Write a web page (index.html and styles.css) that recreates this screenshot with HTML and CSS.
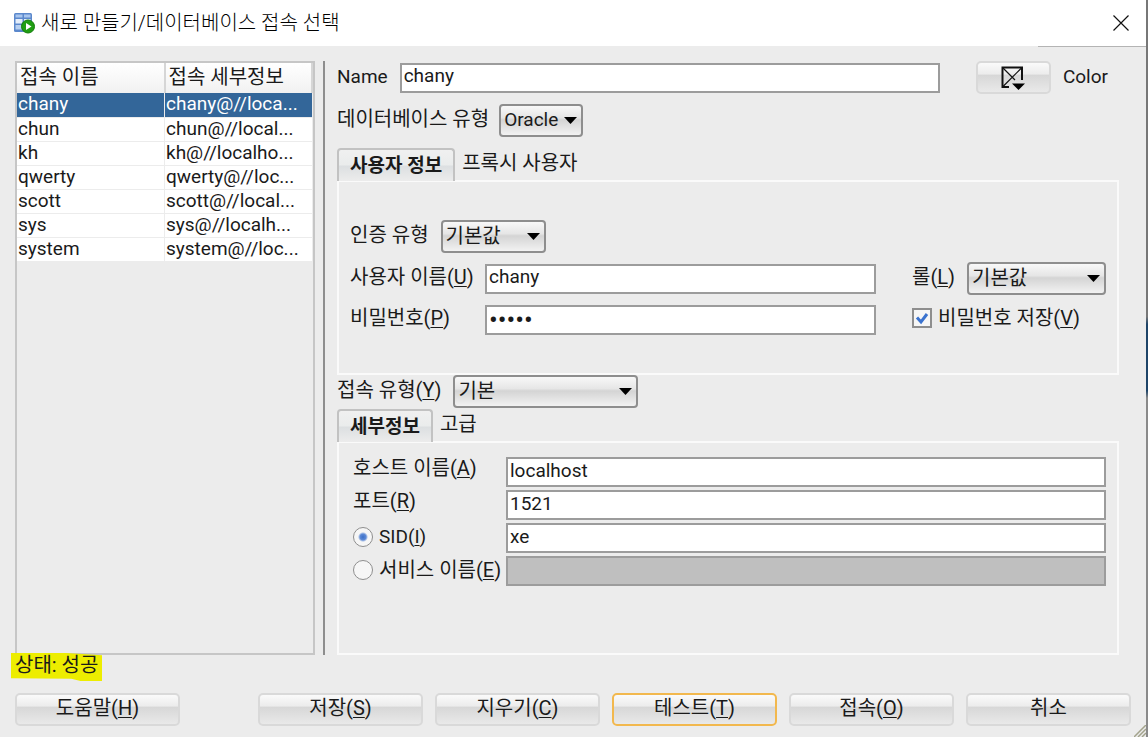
FILE: index.html
```html
<!DOCTYPE html>
<html lang="ko">
<head>
<meta charset="utf-8">
<title>새로 만들기/데이터베이스 접속 선택</title>
<link rel="stylesheet" href="styles.css">
</head>
<body>
<div class="window">
  <header class="titlebar">
    <svg class="app-icon" viewBox="0 0 22 22" aria-hidden="true">
      <rect x="1" y="1" width="18" height="19" rx="1.5" fill="#5b88cc"/>
      <path d="M2.500 2.500h7v3h-7zM11 2.500h6.500v3H11z" fill="#a9c6ee"/>
      <path d="M2.500 7h7v4.500h-7zM11 7h6.500v4.500H11z" fill="#e4edfa"/>
      <path d="M2.500 13h7v4.500h-7zM11 13h6.500v4.500H11z" fill="#b7cff0"/>
      <circle cx="15" cy="14.500" r="6.500" fill="#1f9e12" stroke="#137c0b"/>
      <path d="M13 11v7l5.500-3.500z" fill="#fff"/>
    </svg>
    <h1 class="title">새로 만들기/데이터베이스 접속 선택</h1>
    <button class="close" type="button" aria-label="닫기">
      <svg viewBox="0 0 16 16"><path d="M.5.5l15 15M15.500.5l-15 15" stroke="#111" stroke-width="1.200"/></svg>
    </button>
  </header>

  <main class="content">
    <section class="list">
      <table class="conns">
        <thead><tr><th>접속 이름</th><th>접속 세부정보</th></tr></thead>
        <tbody>
          <tr class="selected"><td>chany</td><td>chany@//loca...</td></tr>
          <tr><td>chun</td><td>chun@//local...</td></tr>
          <tr><td>kh</td><td>kh@//localho...</td></tr>
          <tr><td>qwerty</td><td>qwerty@//loc...</td></tr>
          <tr><td>scott</td><td>scott@//local...</td></tr>
          <tr><td>sys</td><td>sys@//localh...</td></tr>
          <tr><td>system</td><td>system@//loc...</td></tr>
        </tbody>
      </table>
    </section>

    <form class="details" id="details">
      <div class="name-row">
        <label class="latin" for="name">Name</label>
        <input class="field" id="name" type="text" value="chany">
        <button class="btn color-btn" type="button" id="color" aria-labelledby="color-label">
          <svg viewBox="0 0 24 24" aria-hidden="true">
            <path d="M21 14V1.500H1.500V21H8" fill="none" stroke="#111" stroke-width="2"/>
            <path d="M2 2l12 12M20.500 2L2 20.500" stroke="#111" stroke-width="1.200"/>
            <path d="M11 17.500h13L17.500 24z" fill="#000"/>
          </svg>
        </button>
        <label class="latin" id="color-label" for="color">Color</label>
      </div>

      <div class="type-row">
        <label for="dbtype">데이터베이스 유형</label>
        <select class="select db-select" id="dbtype"><option>Oracle</option></select>
      </div>

      <div class="tabs" role="tablist">
        <button class="tab active" type="button" role="tab" aria-selected="true">사용자 정보</button>
        <button class="tab" type="button" role="tab" aria-selected="false">프록시 사용자</button>
      </div>
      <div class="panel user-panel">
        <div class="auth-row">
          <label for="auth">인증 유형</label>
          <select class="select auth-select" id="auth"><option>기본값</option></select>
        </div>
        <div class="user-grid">
          <label for="user">사용자 이름(<u>U</u>)</label>
          <input class="field" id="user" type="text" value="chany">
          <label class="role-label" for="role">롤(<u>L</u>)</label>
          <select class="select" id="role"><option>기본값</option></select>
          <label for="pass">비밀번호(<u>P</u>)</label>
          <input class="field password" id="pass" type="password" value="tiger">
          <label class="save-pass"><input class="check" type="checkbox" checked><span>비밀번호 저장(<u>V</u>)</span></label>
        </div>
      </div>

      <div class="conn-row">
        <label for="conntype">접속 유형(<u>Y</u>)</label>
        <select class="select conn-select" id="conntype"><option>기본</option></select>
      </div>

      <div class="tabs conn-tabs" role="tablist">
        <button class="tab active" type="button" role="tab" aria-selected="true">세부정보</button>
        <button class="tab" type="button" role="tab" aria-selected="false">고급</button>
      </div>
      <div class="panel conn-panel">
        <label for="host">호스트 이름(<u>A</u>)</label>
        <input class="field" id="host" type="text" value="localhost">
        <label for="port">포트(<u>R</u>)</label>
        <input class="field" id="port" type="text" value="1521">
        <label class="choice"><input class="radio" type="radio" name="target" checked><span class="latin">SID(<u>I</u>)</span></label>
        <input class="field" type="text" value="xe" aria-label="SID">
        <label class="choice"><input class="radio" type="radio" name="target"><span>서비스 이름(<u>E</u>)</span></label>
        <input class="field" type="text" disabled aria-label="서비스 이름">
      </div>
    </form>
  </main>

  <p class="status"><span class="mark">상태: 성공</span></p>

  <footer class="actions">
    <button class="btn help" type="button">도움말(<u>H</u>)</button>
    <button class="btn" type="button">저장(<u>S</u>)</button>
    <button class="btn" type="button">지우기(<u>C</u>)</button>
    <button class="btn focused" type="button">테스트(<u>T</u>)</button>
    <button class="btn" type="button">접속(<u>O</u>)</button>
    <button class="btn" type="button">취소</button>
  </footer>
  <svg class="grip" viewBox="0 0 12 12" aria-hidden="true"><path d="M0 12L12 0M4 12l8-8M8 12l4-4" stroke="#a3a38c" stroke-width="1.500"/></svg>
</div>
</body>
</html>
```

FILE: styles.css
```css
* { box-sizing: border-box; }

body {
  margin: 0;
  background: #ececec;
  color: #1a1a1a;
  font-family: Roboto, "Noto Sans CJK KR", sans-serif;
  font-size: 20px;
  line-height: 24px;
}

button, input, select { font: inherit; color: inherit; margin: 0; }

u { text-underline-offset: 2px; text-decoration-thickness: 1px; }

.latin { font-size: 19px; }

.window {
  position: relative;
  display: flex;
  flex-direction: column;
  min-height: 100vh;
  overflow: hidden;
  border-right: 2px solid #858585;
  border-image: linear-gradient(#777 0, #777 43%, #1e4468 44%, #1e4468 53%, #8a8a8a 54%, #8a8a8a 100%) 1;
  border-image-width: 0 2px 0 0;
}

/* Title bar */
.titlebar {
  display: flex;
  align-items: center;
  height: 46px;
  padding: 0 17px 0 13px;
  background: #fff;
}
.app-icon { width: 22px; height: 22px; margin-right: 6px; }
.title { flex: 1; margin: 0; font-size: 20px; font-weight: 300; color: #000; }
.close { width: 16px; height: 16px; padding: 0; border: 0; background: none; }
.close svg { display: block; }

/* Connection list */
.content {
  display: flex;
  flex: 1;
  padding: 15px 27px 0 15px;
  background: linear-gradient(#b4b4b4, #b4b4b4) right top / 108px 1px no-repeat;
}
.list { flex: 0 0 300px; border: 2px solid #c6c6c6; }
.conns { width: 100%; border-collapse: collapse; table-layout: fixed; font-size: 19px; }
.conns th {
  height: 30px;
  padding: 0 3px 3px;
  background: linear-gradient(#fff, #f1f1f1);
  border-right: 2px solid #d6d6d6;
  font-size: 20px;
  font-weight: 400;
  text-align: left;
}
.conns td {
  height: 24px;
  padding: 0 1px 1px;
  line-height: 22px;
  background: #fff;
  border-right: 1px solid #ececec;
  border-bottom: 1px solid #ececec;
  white-space: nowrap;
  overflow: hidden;
}
.conns .selected td { background: #336699; color: #fff; }

/* Details form */
.details {
  flex: 1;
  display: flex;
  flex-direction: column;
  margin-left: 8px;
  padding-left: 12px;
  border-left: 2px solid #8e8e8e;
}
.details label { padding-bottom: 4px; white-space: nowrap; }

.field {
  width: 100%;
  min-width: 0;
  height: 30px;
  padding: 0 2px 4px;
  border: 2px solid #9c9c9c;
  border-radius: 0;
  background: #fff;
  font-size: 19px;
}
.field.password { padding-bottom: 0; font-size: 26px; }
.field:disabled { background: #bfbfbf; }

.select {
  appearance: none;
  width: 100%;
  height: 33px;
  padding: 0 22px 2px 3px;
  border: 2px solid #8e8e8e;
  border-radius: 4px;
  background:
    url("data:image/svg+xml,%3Csvg xmlns='http://www.w3.org/2000/svg' width='13' height='7'%3E%3Cpath d='M0 0h13L6.500 7z'/%3E%3C/svg%3E") right 4px center no-repeat,
    linear-gradient(#f8f8f8 0, #e6e6e6 40%, #d4d4d4 48%, #f2f2f2 100%);
}

.name-row { display: flex; align-items: center; height: 33px; padding-right: 11px; }
.name-row label { padding-bottom: 2px; }
.name-row .field { flex: 1; margin: 0 36px 0 12px; }
.color-btn { width: 75px; flex: none; margin-right: 12px; }
.color-btn svg { width: 24px; height: 24px; display: block; margin: 0 auto; }

.type-row { display: flex; align-items: center; gap: 10px; margin-top: 10px; }
.db-select { width: 84px; font-size: 19px; }

.tabs { display: flex; margin-top: 11px; }
.tab {
  height: 32px;
  padding: 0 7px 2px;
  border: 0;
  background: none;
}
.tab.active {
  position: relative;
  margin-bottom: -1px;
  height: 33px;
  padding: 0 11px;
  border: 2px solid #c2c2c2;
  border-bottom: 0;
  border-radius: 4px 4px 0 0;
  background: linear-gradient(#f0f0f0 0, #eaecec 48%, #dcdfe1 52%, #ececec 100%);
  font-size: 19px;
  font-weight: 700;
}
.panel { border: 2px solid #fafafa; }

.user-panel { padding: 38px 11px 37px; }
.auth-row { display: flex; align-items: center; gap: 12px; margin-bottom: 9px; }
.auth-select { width: 105px; }
.user-grid {
  display: grid;
  grid-template-columns: 135px 1fr 91px 139px;
  row-gap: 8px;
  align-items: center;
}
.role-label { padding-left: 36px; }
.user-grid .save-pass {
  grid-column: span 2;
  display: flex;
  align-items: center;
  gap: 6px;
  height: 33px;
  padding: 0 0 4px 36px;
}

.check, .radio {
  appearance: none;
  flex: none;
  width: 20px;
  height: 20px;
  border: 2px solid #8e8e8e;
  background: #f6f6f6;
}
.check:checked {
  background: #f6f6f6 url("data:image/svg+xml,%3Csvg xmlns='http://www.w3.org/2000/svg' viewBox='0 0 16 16'%3E%3Cpath d='M3 7.500l4 4.500 6-8' fill='none' stroke='%233b73cf' stroke-width='3'/%3E%3C/svg%3E") center / 16px no-repeat;
}
.radio { border-width: 1px; border-radius: 50%; }
.radio:checked { background: radial-gradient(circle, #3b6fc8 0, #5e8ad6 3px, #f6f6f6 5px); }

.conn-row { display: flex; align-items: center; gap: 12px; }
.conn-select { width: 185px; }
.conn-tabs { margin-top: 1px; }

.conn-panel {
  flex: 1;
  display: grid;
  grid-template-columns: 153px 1fr;
  grid-auto-rows: 30px;
  row-gap: 3px;
  align-items: center;
  padding: 14px 11px 40px 14px;
}
.conn-panel label { padding-bottom: 9px; }
.conn-panel .choice { display: flex; align-items: center; gap: 6px; padding-bottom: 2px; }

/* Status and buttons */
.status { position: relative; margin: -2px 0 12px 11px; }
.mark {
  display: inline-block;
  height: 28px;
  padding: 0 4px;
  background: #eded00;
  clip-path: polygon(0 0, 60% 0, 100% 8%, 100% 100%, 76% 100%, 66% 92%, 0 90%);
}

.actions {
  display: grid;
  grid-template-columns: 1fr 54px repeat(5, 1fr);
  column-gap: 12px;
  padding: 0 15px 11px;
}
.actions .help { grid-column: 1 / 2; }
.actions .help + .btn { grid-column: 3; }
.btn {
  height: 33px;
  padding: 0 4px 4px;
  border: 2px solid #d9d9d9;
  border-radius: 5px;
  background: linear-gradient(#fafafa 0, #ececec 38%, #d7d7d7 42%, #e9e9e9 100%);
  font-size: 20px;
  line-height: 24px;
}
.btn.color-btn { padding: 0; }
.btn.focused { border-color: #f2b84e; }

.grip { position: absolute; right: 0; bottom: 0; width: 12px; height: 12px; }
```
